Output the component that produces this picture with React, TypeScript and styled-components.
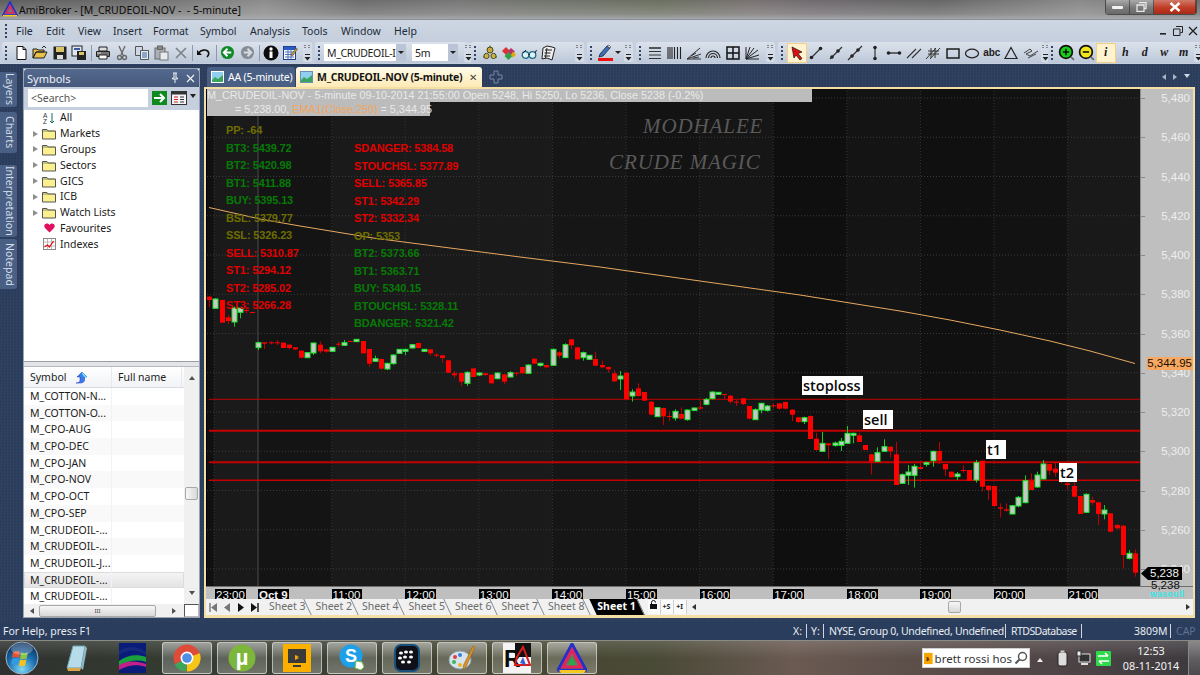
import React from "react";
import styled, { createGlobalStyle } from "styled-components";

const GlobalStyle = createGlobalStyle`
  html, body { margin: 0; padding: 0; background: #2b3d5c; }
  * { box-sizing: border-box; }
  #root { width: 1200px; height: 675px; overflow: hidden; }
`;

const UI = `"Noto Sans", "Open Sans", sans-serif`;
const ARIAL = `"Liberation Sans", Arial, sans-serif`;

const Shell = styled.div`
  width: 1200px;
  height: 675px;
  display: flex;
  flex-direction: column;
  font-family: ${UI};
  font-size: 11px;
  color: #1c1c1c;
  overflow: hidden;
`;

/* ---------- title bar ---------- */
const TitleBar = styled.div`
  height: 20px;
  flex: none;
  display: flex;
  align-items: flex-start;
  padding: 1px 3px 0 2px;
  background:
    linear-gradient(180deg, rgba(150,150,150,0) 0%, rgba(190,190,190,.35) 70%, #a9aeb4 100%),
    linear-gradient(90deg, #5e5e5e 0%, #6a6a6a 10%, #8d8d8d 22%, #6b6b6b 30%, #777 38%, #6f7269 48%, #6a6f5f 55%, #787272 63%, #6f6a6e 68%, #666 78%, #8a8a8a 90%, #6d6d6d 100%);
  box-shadow: inset 0 -1px 0 #8a8f96;
`;
const TitleText = styled.span`
  margin-left: 1px;
  font-size: 10.5px;
  line-height: 18px;
  white-space: pre;
  color: #0c0c0c;
`;
const WindowButtons = styled.div`
  margin-left: auto;
  margin-right: 0;
  display: flex;
  height: 15px;
  margin-top: -1px;
  border: 1px solid #4b4b4b;
  border-top: none;
  border-radius: 0 0 4px 4px;
  overflow: hidden;
`;
const WinButton = styled.div<{ $w: number; $danger?: boolean }>`
  width: ${p => p.$w}px;
  display: flex;
  align-items: center;
  justify-content: center;
  border-right: 1px solid rgba(30,30,30,.5);
  background: ${p => p.$danger
    ? "linear-gradient(180deg,#cf7a6a 0%,#c13c26 55%,#a82a18 100%)"
    : "linear-gradient(180deg,#a9a9a9 0%,#7a7a7a 55%,#6a6a6a 100%)"};
`;

/* ---------- menu bar ---------- */
const MenuBar = styled.div`
  height: 21px;
  flex: none;
  display: flex;
  align-items: center;
  padding: 0 0 0 3px;
  background: linear-gradient(180deg, #cdd6e2 0%, #c5cfdd 100%);
  font-size: 10.5px;
`;
const Grip = styled.i`
  flex: none;
  width: 2px;
  height: 14px;
  margin: 0 4px 0 2px;
  background: repeating-linear-gradient(180deg, #2f4468 0 2px, transparent 2px 4px);
`;
const MenuGrip = styled(Grip)`
  margin-right: 9px;
`;
const MenuItem = styled.span<{ $w: number }>`
  width: ${p => p.$w}px;
  flex: none;
  color: #222b38;
`;
const MdiButtons = styled.div`
  margin-left: auto;
  display: flex;
  gap: 5px;
  padding-right: 2px;
  align-items: center;
`;

/* ---------- tool bars ---------- */
const ToolRow = styled.div`
  height: 23px;
  flex: none;
  display: flex;
  gap: 3px;
  padding: 1px 2px 1px 2px;
  background: #c5cfdd;
`;
const ToolBand = styled.div<{ $w: number }>`
  width: ${p => p.$w}px;
  flex: none;
  display: flex;
  align-items: center;
  padding-left: 1px;
  border-radius: 3px;
  background: linear-gradient(180deg, #dbe2ec 0%, #ccd5e2 50%, #bcc8d9 100%);
`;
const Tool = styled.span<{ $selected?: boolean }>`
  width: 19.5px;
  height: 20px;
  flex: none;
  display: flex;
  align-items: center;
  justify-content: center;
  ${p => p.$selected && `
    background: #fff3cf;
    box-shadow: inset 0 0 0 1px #f3cf86;
  `}
`;
const ToolLetter = styled.span<{ $serif?: boolean }>`
  font-family: ${p => p.$serif ? `"Liberation Serif", serif` : ARIAL};
  font-weight: 700;
  font-size: ${p => p.$serif ? 12 : 10}px;
  font-style: ${p => p.$serif ? "italic" : "normal"};
  color: #202020;
`;
const Sep = styled.i`
  width: 1px;
  height: 16px;
  margin: 0 1.5px;
  flex: none;
  background: #8d99ab;
`;
const Spacer = styled.i`
  flex: 1;
`;
const Combo = styled.div<{ $w: number }>`
  width: ${p => p.$w}px;
  height: 17px;
  flex: none;
  background: #fff;
  display: flex;
  align-items: center;
  padding-left: 3px;
  font-size: 10.5px;
  letter-spacing: -0.35px;
  white-space: nowrap;
`;
const ComboArrow = styled.div`
  width: 10px;
  height: 17px;
  flex: none;
  background: #b9c5d6;
  display: flex;
  align-items: center;
  justify-content: center;
  margin-right: 6px;
  &::after {
    content: "";
    border: 3px solid transparent;
    border-top: 3px solid #222;
    border-bottom: none;
  }
`;
const MiniCaret = styled.i`
  flex: none;
  border: 3px solid transparent;
  border-top: 3px solid #222;
  border-bottom: none;
  margin: 0 3px 0 -1px;
`;
const OverflowBox = styled.span`
  width: 9px;
  height: 19px;
  flex: none;
  display: flex;
  flex-direction: column;
  align-items: center;
  justify-content: space-between;
  padding: 2px 0 1px;
  background: #d4dce7;
  border-radius: 2px;
`;

const Overflow = () => (
  <OverflowBox>
    <svg width="7" height="3" viewBox="0 0 7 3"><path d="M1 0v1M1 2v1M5 0v1M5 2v1" stroke="#333" /></svg>
    <svg width="7" height="7" viewBox="0 0 7 7"><rect x="1" y="0" width="5" height="1" fill="#222" /><path d="M.5 3h6L3.5 6.5z" fill="#222" /></svg>
  </OverflowBox>
);

/* ---------- main area ---------- */
const Main = styled.div`
  height: 558px;
  flex: none;
  display: flex;
  background-color: #2b3d5c;
  background-image: conic-gradient(#2f4262 25%, #2a3b59 0 50%, #2f4262 0 75%, #2a3b59 0);
  background-size: 3px 3px;
`;
const SideTabs = styled.div`
  width: 17px;
  flex: none;
  margin-right: 7px;
  display: flex;
  flex-direction: column;
  padding-top: 8px;
`;
const SideTab = styled.div<{ $h: number; $gap: number }>`
  height: ${p => p.$h}px;
  margin-bottom: ${p => p.$gap}px;
  writing-mode: vertical-rl;
  text-align: center;
  font-size: 10.5px;
  line-height: 15px;
  color: #d5deea;
  background: #4a5f84;
  border-radius: 0 3px 3px 0;
`;

const SymbolsPanel = styled.div`
  width: 175px;
  flex: none;
  margin-top: 5px;
  height: 548px;
  display: flex;
  flex-direction: column;
  background: #fff;
  box-shadow: 0 0 0 1px #9aa3b0;
`;
const PanelHead = styled.div`
  height: 18px;
  flex: none;
  display: flex;
  align-items: center;
  padding: 0 4px 0 3px;
  border-radius: 3px 3px 0 0;
  background: linear-gradient(180deg, #54698e 0%, #46597c 100%);
  color: #eef2f7;
  font-size: 11px;
  & > span { flex: 1; }
`;
const SearchRow = styled.div`
  height: 23px;
  flex: none;
  display: flex;
  align-items: center;
  padding: 0 3px 2px 4px;
  background: #c5cfdd;
`;
const SearchInput = styled.div`
  width: 120px;
  height: 18px;
  background: #fff;
  display: flex;
  align-items: center;
  padding-left: 3px;
  font-size: 10.5px;
  color: #555;
  margin-right: 4px;
  flex: none;
`;
const Tree = styled.div`
  height: 251px;
  flex: none;
  background: #fff;
`;
const TreeRow = styled.div`
  height: 15.8px;
  display: flex;
  align-items: center;
  font-size: 10.5px;
  line-height: 15px;
  color: #202020;
`;
const Expander = styled.i<{ $on?: boolean }>`
  width: 0;
  height: 0;
  margin-left: 9px;
  margin-right: 4px;
  flex: none;
  border-left: 5px solid ${p => p.$on ? "#8f8f8f" : "transparent"};
  border-top: 3.5px solid transparent;
  border-bottom: 3.5px solid transparent;
`;
const TreeIcon = styled.span`
  width: 14px;
  height: 14px;
  margin-right: 4px;
  flex: none;
  display: flex;
  align-items: center;
  justify-content: center;
`;
const Splitter = styled.div`
  height: 6px;
  flex: none;
  background: linear-gradient(180deg, #9a9fa6 0 1px, #e2e4e8 1px 5px, #b5b9c0 5px);
`;
const TableArea = styled.div`
  flex: 1;
  min-height: 0;
  display: flex;
  background: #fff;
`;
const TableCols = styled.div`
  flex: 1;
  min-width: 0;
  overflow: hidden;
`;
const TableHead = styled.div`
  height: 21px;
  display: flex;
  align-items: center;
  font-size: 10.5px;
  background: linear-gradient(180deg, #fff 0%, #f1f3f6 100%);
  border-bottom: 1px solid #d8dbe0;
`;
const HeadCell = styled.div<{ $w: number }>`
  width: ${p => p.$w}px;
  flex: none;
  height: 100%;
  display: flex;
  align-items: center;
  padding-left: 6px;
  gap: 9px;
  border-right: 1px solid #e8eaee;
`;
const TableRow = styled.div<{ $alt: boolean; $selected?: boolean }>`
  height: 16.7px;
  display: flex;
  align-items: center;
  font-size: 10.5px;
  white-space: nowrap;
  background: ${p => p.$selected
    ? "linear-gradient(180deg,#f5f5f5 0%,#e3e3e3 100%)"
    : p.$alt ? "#f9f9f9" : "#fff"};
  ${p => p.$selected && "box-shadow: inset 0 0 0 1px #dcdcdc;"}
`;
const SymCell = styled.div`
  width: 88px;
  padding-left: 6px;
  flex: none;
  border-right: 1px solid #eef3fa;
  height: 100%;
  line-height: 16px;
`;
const VScroll = styled.div`
  width: 15px;
  flex: none;
  background: #f0f0f0;
  display: flex;
  flex-direction: column;
  align-items: center;
  justify-content: space-between;
  padding: 6px 0;
`;
const VThumb = styled.div`
  width: 13px;
  height: 13px;
  margin-top: 15px;
  border: 1px solid #a8a8a8;
  border-radius: 2px;
  background: linear-gradient(90deg, #f7f7f7, #d8d8d8);
`;
const Tri = styled.i<{ $dir: "up" | "down" | "left" | "right"; $c?: string }>`
  width: 0;
  height: 0;
  flex: none;
  border: 3.5px solid transparent;
  ${p => `border-${({ up: "bottom", down: "top", left: "right", right: "left" })[p.$dir]}: 4px solid ${p.$c || "#505050"};`}
  ${p => `border-${p.$dir}: none;`}
`;
const HScrollRow = styled.div`
  height: 13px;
  flex: none;
  display: flex;
  align-items: center;
  background: #f0f0f0;
  padding-left: 6px;
`;
const HThumb = styled.div<{ $w: number; $ml: number }>`
  width: ${p => p.$w}px;
  height: 12px;
  margin-left: ${p => p.$ml}px;
  flex: none;
  border: 1px solid #a8a8a8;
  border-radius: 2px;
  background: linear-gradient(180deg, #f7f7f7, #d8d8d8);
  display: flex;
  align-items: center;
  justify-content: center;
  font-size: 6px;
  line-height: 8px;
  color: #444;
`;
const Corner = styled.div`
  margin-left: auto;
  width: 15px;
  height: 13px;
  border: 1px solid #555;
  border-right-color: #bbb;
  border-bottom-color: #bbb;
  background: #fff;
`;

/* ---------- workspace ---------- */
const Workspace = styled.div`
  width: 995px;
  flex: none;
  margin-left: 5px;
  display: flex;
  flex-direction: column;
`;
const TabStrip = styled.div`
  height: 23px;
  flex: none;
  padding: 2px 9px 0 3px;
  display: flex;
  align-items: flex-end;
`;
const DocTab = styled.div<{ $active?: boolean; $w: number }>`
  width: ${p => p.$w}px;
  height: 20px;
  flex: none;
  display: flex;
  align-items: center;
  gap: 4px;
  padding-left: 4px;
  font-size: 10.5px;
  white-space: nowrap;
  font-weight: ${p => p.$active ? 700 : 400};
  letter-spacing: ${p => p.$active ? "-0.25px" : "-0.2px"};
  color: ${p => p.$active ? "#151515" : "#fff"};
  background: ${p => p.$active ? "linear-gradient(180deg,#fffbe9,#fdeab6)" : "#4a5f84"};
  border-radius: 3px 3px 0 0;
  margin-right: 1px;
`;
const TabClose = styled.span`
  margin-left: 3px;
  font-size: 10px;
  font-weight: 400;
  color: #444;
`;
const TabTail = styled.div`
  margin-left: auto;
  display: flex;
  align-items: center;
  gap: 7px;
  height: 20px;
`;
const Frame = styled.div`
  width: 991px;
  height: 531px;
  flex: none;
  display: flex;
  flex-direction: column;
  border: 2px solid #f3dfa6;
  border-top-width: 2px;
  border-bottom-width: 3px;
  background: #bfbfbf;
`;
const ChartRow = styled.div`
  position: relative;
  height: 497px;
  flex: none;
  display: flex;
`;
const Plot = styled.div`
  position: relative;
  width: 934px;
  flex: none;
  background: #141414;
  overflow: hidden;
  border-left: 1px solid #000;
`;
const ChartSvg = styled.svg`
  display: block;
  position: absolute;
  left: 0;
  top: 0;
`;
const PriceAxis = styled.div`
  flex: 1;
  padding-top: 2px;
  background: #bfbfbf;
  border-left: 1px solid #8c8c8c;
`;
const PriceLabel = styled.div`
  height: 39.25px;
  line-height: 14px;
  text-align: right;
  padding-right: 3px;
  font-family: ${ARIAL};
  font-size: 11.5px;
  color: #eeeeee;
  position: relative;
  &::before {
    content: "";
    position: absolute;
    left: 0;
    top: 7px;
    width: 4px;
    height: 1px;
    background: #8a8a8a;
  }
`;
const PriceTag = styled.div`
  position: absolute;
  left: 941px;
  top: 268px;
  width: 46px;
  height: 13px;
  line-height: 13px;
  text-align: right;
  padding-right: 1px;
  background: #f7a862;
  font-family: ${ARIAL};
  font-size: 11.5px;
  color: #201000;
`;
const LastTag = styled.div`
  position: absolute;
  left: 935px;
  top: 478px;
  width: 41px;
  height: 13px;
  line-height: 13px;
  padding-left: 9px;
  background: #000;
  clip-path: polygon(0 50%, 7px 0, 100% 0, 100% 100%, 7px 100%);
  font-family: ${ARIAL};
  font-size: 11.5px;
  color: #f2f2f2;
`;
const LastPlain = styled.div`
  position: absolute;
  left: 945px;
  top: 491px;
  line-height: 10px;
  font-family: ${ARIAL};
  font-size: 11.5px;
  color: #111;
`;
const CyanNote = styled.div`
  position: absolute;
  left: 944px;
  top: 501px;
  line-height: 9px;
  font-family: ${ARIAL};
  font-weight: 700;
  font-size: 8.5px;
  letter-spacing: .5px;
  color: #35e6e6;
  z-index: 2;
`;
const InfoBar = styled.div`
  position: absolute;
  left: 0;
  top: -1px;
  font-family: ${ARIAL};
  font-size: 10.8px;
  line-height: 14px;
  color: #e9e9e9;
  white-space: nowrap;
`;
const InfoLine = styled.div<{ $w: number; $pad?: number }>`
  width: ${p => p.$w}px;
  height: 14px;
  padding-left: ${p => p.$pad || 0}px;
  background: #bcbcbc;
`;
const Ema = styled.span`
  color: #f2a55f;
`;
const Watermark = styled.div<{ $x: number; $y: number; $ls: number }>`
  position: absolute;
  left: ${p => p.$x}px;
  top: ${p => p.$y}px;
  font-family: "Liberation Serif", serif;
  font-style: italic;
  font-size: 21px;
  line-height: 24px;
  letter-spacing: ${p => p.$ls}px;
  color: #5a5a5a;
  white-space: nowrap;
`;
const Watermarks = styled.div``;
const LevelColumn = styled.div<{ $x: number; $y: number }>`
  position: absolute;
  left: ${p => p.$x}px;
  top: ${p => p.$y}px;
  display: flex;
  flex-direction: column;
  font-family: ${ARIAL};
  font-size: 11px;
  font-weight: 700;
  letter-spacing: -0.15px;
`;
const Level = styled.div<{ $c: string }>`
  height: 17.55px;
  line-height: 17.55px;
  white-space: nowrap;
  color: ${p => p.$c};
`;
const Note = styled.div<{ $x: number; $y: number; $w: number }>`
  position: absolute;
  left: ${p => p.$x}px;
  top: ${p => p.$y}px;
  width: ${p => p.$w}px;
  height: 19px;
  line-height: 19px;
  background: #fff;
  color: #0a0a0a;
  font-family: "Open Sans", sans-serif;
  font-weight: 600;
  font-size: 14.5px;
  padding-left: 1px;
  white-space: nowrap;
`;
const TimeAxis = styled.div`
  height: 13px;
  flex: none;
  display: flex;
  padding-left: 9px;
  background: #bfbfbf;
  border-top: 1px solid #6f6f6f;
`;
const TimeCell = styled.div<{ $w: number }>`
  width: ${p => p.$w}px;
  flex: none;
`;
const TimeLabel = styled.span<{ $bold?: boolean }>`
  display: inline-block;
  height: 12px;
  line-height: 12px;
  padding: 0 1px;
  background: #000;
  color: #f2f2f2;
  font-family: ${ARIAL};
  font-size: 11.5px;
  font-weight: ${p => p.$bold ? 700 : 400};
`;
const SheetRow = styled.div`
  flex: 1;
  display: flex;
  align-items: stretch;
  background: #f1f1f1;
  font-size: 10.5px;
`;
const SheetNav = styled.div`
  width: 58px;
  flex: none;
  display: flex;
  align-items: center;
  padding-left: 2px;
  gap: 4px;
`;
const SheetTab = styled.div<{ $active?: boolean }>`
  width: ${p => p.$active ? 54 : 46.5}px;
  flex: none;
  position: relative;
  text-align: center;
  line-height: 15px;
  color: ${p => p.$active ? "#fff" : "#6c6c6c"};
  font-weight: ${p => p.$active ? 700 : 400};
  z-index: ${p => p.$active ? 1 : 0};
  &::before {
    content: "";
    position: absolute;
    inset: 0 3px 0 3px;
    transform: skewX(25deg);
    border-right: 1px solid #888;
    background: ${p => p.$active ? "#000" : "transparent"};
    z-index: -1;
  }
`;
const SheetTabs = styled.div`
  display: flex;
  position: relative;
  z-index: 0;
`;
const SheetBtn = styled.div`
  width: 13px;
  height: 14px;
  margin-top: 1px;
  flex: none;
  background: #fafafa;
  border-right: 1px solid #cfcfcf;
  font-size: 7px;
  font-weight: 700;
  line-height: 14px;
  text-align: center;
  color: #222;
`;
const SheetTools = styled.div`
  margin-left: 4px;
  display: flex;
`;
const SheetTrack = styled.div`
  flex: 1;
  margin-left: 2px;
  display: flex;
  align-items: center;
  padding: 0 3px;
`;

/* ---------- status / task bars ---------- */
const StatusBar = styled.div`
  height: 18px;
  flex: none;
  display: flex;
  align-items: center;
  color: #e8edf3;
  font-size: 10.5px;
  background: #2b3d5c;
  white-space: nowrap;
`;
const StatusCell = styled.span<{ $w: number; $pad?: number; $dim?: boolean; $bar?: boolean; $tight?: number }>`
  width: ${p => p.$w}px;
  flex: none;
  padding-left: ${p => p.$pad ?? 3}px;
  line-height: 14px;
  letter-spacing: ${p => p.$tight || 0}px;
  color: ${p => p.$dim ? "#5f7190" : "#e8edf3"};
  ${p => p.$bar && "border-right: 1px solid #cfd6e0;"}
`;
const TaskBar = styled.div`
  height: 35px;
  flex: none;
  display: flex;
  align-items: center;
  border-top: 1px solid #8b8b86;
  background:
    linear-gradient(180deg, rgba(255,255,255,.14) 0%, rgba(255,255,255,0) 50%),
    linear-gradient(90deg, #2f3130 0%, #333a30 12%, #3d4132 30%, #45452f 42%, #4a4a38 55%, #6a5a52 66%, #5c4f49 76%, #4f4446 88%, #3c3a3e 100%);
`;
const TaskSlot = styled.div<{ $w: number; $active?: boolean; $ml?: number }>`
  width: ${p => p.$w}px;
  height: 32px;
  margin-right: ${p => p.$active ? 5 : 0}px;
  margin-left: ${p => p.$ml || 0}px;
  flex: none;
  display: flex;
  align-items: center;
  justify-content: center;
  border-radius: 3px;
  ${p => p.$active && `
    border: 1px solid rgba(235,235,235,.6);
    background: linear-gradient(180deg, rgba(255,255,255,.45) 0%, rgba(255,255,255,.2) 50%, rgba(255,255,255,.28) 100%);
  `}
`;
const Tray = styled.div`
  margin-left: auto;
  display: flex;
  align-items: center;
  height: 100%;
`;
const BingBox = styled.div`
  width: 108px;
  height: 20px;
  display: flex;
  align-items: center;
  gap: 2px;
  padding: 0 1px;
  background: #fff;
  border: 1px solid #cfcfcf;
  font-size: 11.5px;
  color: #333;
  white-space: nowrap;
  overflow: hidden;
`;
const TrayIcon = styled.span<{ $w: number }>`
  width: ${p => p.$w}px;
  flex: none;
  display: flex;
  align-items: center;
  justify-content: center;
`;
const Clock = styled.div`
  width: 74px;
  text-align: center;
  color: #f4f4f4;
  font-size: 10.8px;
  line-height: 15px;
`;
const ShowDesktop = styled.div`
  width: 12px;
  height: 100%;
  border-left: 1px solid #888;
  background: linear-gradient(180deg, rgba(255,255,255,.3), rgba(255,255,255,.08));
`;

/* ---------- icons ---------- */
const Svg = ({ s = 16, children }: { s?: number; children: React.ReactNode }) => (
  <svg width={s} height={s} viewBox="0 0 16 16">{children}</svg>
);

const ToolIcons: Record<string, React.ReactNode> = {
  file: <Svg><path d="M4 1.5h6l3 3v10H4z" fill="#fff" stroke="#111" /><path d="M10 1.5v3h3" fill="none" stroke="#111" /></Svg>,
  open: <Svg><path d="M1 13V4h4l1 1h6v2H4l-3 6 3-6h11l-3 6z" fill="#e9c04a" stroke="#222" /><path d="M10 3l2-2 2 2" fill="none" stroke="#222" /></Svg>,
  save: <Svg><rect x="1.5" y="1.5" width="13" height="13" fill="#222" /><rect x="4" y="2" width="8" height="5" fill="#d9c66a" /><rect x="5" y="10" width="6" height="4" fill="#ddd" /></Svg>,
  saveall: <Svg><rect x="1" y="1" width="10" height="10" fill="#dfe7f2" stroke="#222" /><rect x="3" y="3" width="6" height="2" fill="#3b5c9c" /><rect x="6" y="6" width="9" height="9" fill="#222" /><rect x="8" y="7" width="5" height="3" fill="#d9c66a" /></Svg>,
  print: <Svg><path d="M4 2h8v4H4z" fill="#ddd" stroke="#222" /><path d="M1.5 6.5h13v5h-13z" fill="#777" stroke="#222" /><path d="M4 10h8v4H4z" fill="#fff" stroke="#222" /><path d="M2 8h4" stroke="#ddd" /></Svg>,
  cut: <Svg><path d="M5 1l4 9M11 1L7 10" stroke="#666" strokeWidth="1.3" fill="none" /><circle cx="5.5" cy="12.5" r="2" fill="none" stroke="#666" strokeWidth="1.3" /><circle cx="10.5" cy="12.5" r="2" fill="none" stroke="#666" strokeWidth="1.3" /></Svg>,
  copy: <Svg><path d="M1.5 1.5h7v9h-7z" fill="#cfd7e4" stroke="#555" /><path d="M6.5 5.5h8v9h-8z" fill="#e8edf5" stroke="#555" /><path d="M8 8h5M8 10h5M8 12h5" stroke="#2f5fa8" /></Svg>,
  paste: <Svg><rect x="2" y="3" width="10" height="11" fill="#aab0b8" stroke="#666" /><rect x="4.5" y="1" width="5" height="3.5" fill="#888" stroke="#666" /><rect x="7" y="7" width="8" height="8" fill="#e6e9ee" stroke="#777" /></Svg>,
  del: <Svg><path d="M3 3l10 10M13 3L3 13" stroke="#7a7f86" strokeWidth="1.5" /></Svg>,
  undo: <Svg><path d="M2.5 8c3-3.5 7-3.5 9-2s1.5 4-.5 6" fill="none" stroke="#111" strokeWidth="1.6" /><path d="M1 5v5h5z" fill="#111" /></Svg>,
  back: <Svg s={15}><circle cx="8" cy="8" r="7" fill="#118a2a" /><path d="M4 8h8M8 4L4 8l4 4" stroke="#fff" strokeWidth="2" fill="none" /></Svg>,
  fwd: <Svg s={15}><circle cx="8" cy="8" r="7" fill="#878d96" /><path d="M4 8h8M8 4l4 4-4 4" stroke="#d9dde3" strokeWidth="2" fill="none" /></Svg>,
  info: <Svg><circle cx="8" cy="8" r="7.5" fill="#0c0c0c" /><rect x="6.5" y="6.5" width="3" height="6.5" fill="#fff" /><circle cx="8" cy="4" r="1.7" fill="#fff" /></Svg>,
  calc: <Svg><rect x="1.5" y="1.5" width="12" height="13" fill="#fff" stroke="#1e3f95" /><rect x="2" y="2" width="11" height="3" fill="#2b5cc2" /><path d="M3 7h9M3 9.5h9M3 12h9M6 5v9M9 5v9" stroke="#4c6fb8" /><path d="M9 10l5-7 1.5 1-5 7z" fill="#c9a227" stroke="#333" strokeWidth=".5" /></Svg>,
  gear: <Svg><circle cx="8" cy="5" r="3" fill="#c9a93a" stroke="#4a4a20" /><circle cx="4.5" cy="11" r="2.6" fill="#c9b64a" stroke="#4a4a20" /><circle cx="11.5" cy="11" r="2.6" fill="#c9b64a" stroke="#4a4a20" /><path d="M8 .5v2M3 8l1 1M13 8l-1 1M1 12h1M14 12h1" stroke="#4a4a20" /></Svg>,
  hearts: <Svg><path d="M5 2l4 4-4 4-4-4z" fill="#e03131" /><path d="M10 3l4 3.5L10 10 6.5 6.5z" fill="#b8326a" /><path d="M7.5 7l4 4-4 4-4-4z" fill="#2f9e44" /><path d="M12 6.5l3 3-3 3-2-2z" fill="#e0a800" /></Svg>,
  glasses: <Svg><circle cx="4.5" cy="10" r="3.3" fill="#dff2f7" stroke="#1f6b80" strokeWidth="1.3" /><circle cx="11.5" cy="10" r="3.3" fill="#dff2f7" stroke="#1f6b80" strokeWidth="1.3" /><path d="M7.5 9.5H9M14 8l1.5-3M2 8l3-3" stroke="#222" fill="none" /></Svg>,
  map: <Svg><path d="M3 3l4-2 5 1 3 1-3 12-5-2-5 1z" fill="#eee" stroke="#222" /><path d="M5 5h7M4.5 8h6M4 11h6M7 3l-1.5 10" stroke="#222" /></Svg>,
  pen: <svg width="15" height="18" viewBox="0 0 15 18"><path d="M2 10l7-8 3 2-7 8-4 1z" fill="#3d6fc0" stroke="#111" strokeWidth=".7" /><path d="M9 2l2-1 2 2-1 1z" fill="#eee" stroke="#111" strokeWidth=".5" /><rect x="0" y="14" width="15" height="3" fill="#f01010" /></svg>,
  hlines: <Svg><path d="M2 3h12M2 6.5h12M2 10h12M2 13.5h12" stroke="#333" strokeWidth="1" /><path d="M2 3h12" stroke="#222" /></Svg>,
  vlines: <Svg><path d="M2 2v12M4 2v12M6 2v12M8.5 2v12M11.5 2v12M14.5 2v12" stroke="#222" strokeWidth="1.1" /></Svg>,
  fib: <Svg><path d="M1 14L14 3M1 14l14-5M1 14h14" stroke="#333" fill="none" /><path d="M5 11l5-3M7 13l6-1" stroke="#333" /></Svg>,
  arcs: <Svg><path d="M1 13a7 7 0 0 1 14 0M3.5 13a4.5 4.5 0 0 1 9 0M6 13a2 2 0 0 1 4 0" fill="none" stroke="#222" strokeWidth="1.2" /></Svg>,
  grid: <Svg><path d="M2 2h12v12H2zM2 8h12M8 2v12" fill="none" stroke="#111" strokeWidth="1.5" /></Svg>,
  gann: <Svg><path d="M2 14V2M2 14h13M2 14L6 2M2 14L10 3M2 14L14 5M2 14l13-4" stroke="#222" fill="none" /></Svg>,
  cursor: <Svg><path d="M3 2l10 5-4 1.5 4 5-2 1.5-4-5-2 3z" fill="#e01010" stroke="#111" strokeWidth=".7" /></Svg>,
  seg1: <Svg><path d="M3 13L13 3" stroke="#333" strokeWidth="1.2" /><circle cx="3.5" cy="12.5" r="1.8" fill="#222" /><circle cx="12.5" cy="3.5" r="1.8" fill="#222" /></Svg>,
  seg2: <Svg><path d="M2 14L14 2" stroke="#333" strokeWidth="1.2" /><circle cx="4" cy="12" r="1.8" fill="#222" /><circle cx="10" cy="6" r="1.8" fill="#222" /></Svg>,
  seg3: <Svg><path d="M1 15L15 1" stroke="#333" strokeWidth="1.2" /><circle cx="5" cy="11" r="1.8" fill="#222" /><circle cx="11" cy="5" r="1.8" fill="#222" /></Svg>,
  vseg: <Svg><path d="M8 2v12" stroke="#333" strokeWidth="1.2" /><circle cx="8" cy="2.5" r="1.8" fill="#222" /><circle cx="8" cy="13.5" r="1.8" fill="#222" /></Svg>,
  hseg: <Svg><path d="M1 8h14" stroke="#333" strokeWidth="1.4" /><circle cx="2.5" cy="8" r="1.8" fill="#222" /><circle cx="13.5" cy="8" r="1.8" fill="#222" /></Svg>,
  par: <Svg><path d="M1 13L10 4M6 13l9-9" stroke="#333" strokeWidth="1.1" /></Svg>,
  pitch: <Svg><path d="M1 14L11 3M5 14L15 3M3 9h11M3 6h11M6 3v10M10 3v10" stroke="#333" fill="none" /></Svg>,
  rect: <Svg><rect x="2" y="4" width="12" height="9" fill="none" stroke="#111" strokeWidth="1.4" /></Svg>,
  ellipse: <Svg><ellipse cx="8" cy="8.5" rx="6.5" ry="4.3" fill="none" stroke="#222" strokeWidth="1.2" /></Svg>,
  tri: <Svg><path d="M8 2.5l6 11H2z" fill="none" stroke="#222" strokeWidth="1.2" /></Svg>,
  wave: <Svg><path d="M1 8l6-4 2 2-6 3 4 2 8-5M5 13l8-4" stroke="#444" fill="none" /></Svg>,
  zoomin: <Svg s={17}><circle cx="7.5" cy="7.5" r="6" fill="#18d018" stroke="#111" strokeWidth="1.6" /><path d="M4.5 7.5h6M7.5 4.5v6" stroke="#111" strokeWidth="1.5" /><path d="M12 12l3 3" stroke="#666" strokeWidth="1.5" /></Svg>,
  zoomout: <Svg s={17}><circle cx="7.5" cy="7.5" r="6" fill="#f2e51a" stroke="#111" strokeWidth="1.6" /><path d="M4.5 7.5h6" stroke="#111" strokeWidth="1.5" /><path d="M12 12l3 3" stroke="#666" strokeWidth="1.5" /></Svg>,
};

const T = ({ n, sel }: { n: string; sel?: boolean }) => <Tool $selected={sel}>{ToolIcons[n]}</Tool>;
const L = ({ t, sel, serif }: { t: string; sel?: boolean; serif?: boolean }) => (
  <Tool $selected={sel}><ToolLetter $serif={serif}>{t}</ToolLetter></Tool>
);

const FolderIcon = () => (
  <svg width="14" height="13" viewBox="0 0 14 13"><path d="M.5 2.5H5L6 4h7.5v8H.5z" fill="#fbf090" stroke="#555" /><path d="M1 4h12" stroke="#8a8a60" /></svg>
);

const NavIcon = ({ d, c, bar }: { d: string; c: string; bar?: string }) => (
  <svg width="10" height="11" viewBox="0 0 10 11">
    {bar && <path d={bar} stroke={c} strokeWidth="1.4" />}
    <path d={d} fill={c} />
  </svg>
);

const TaskIcons = {
  orb: (
    <svg width="34" height="34" viewBox="0 0 34 34">
      <defs>
        <radialGradient id="orb" cx="50%" cy="85%" r="80%"><stop offset="0" stopColor="#7fd9f5" /><stop offset=".55" stopColor="#1d6fb0" /><stop offset="1" stopColor="#0c2f5c" /></radialGradient>
      </defs>
      <circle cx="17" cy="17" r="16" fill="url(#orb)" stroke="#9fb4c6" strokeWidth="1" />
      <path d="M8 11c3-1.5 5-1 7 0l-1 6c-2-1-4-1.5-7 0z" fill="#e8502f" />
      <path d="M16 11.5c2.5 1 4.5 1 7 0l-1.5 6c-2 1-4.5 1-6.5 0z" fill="#8cc63f" />
      <path d="M7 18c3-1.5 5-1 7 0l-1 6c-2-1-4-1.5-7 0z" fill="#2f9be0" />
      <path d="M15 18.5c2 1 4.5 1 6.5 0l-1.5 6c-2 1-4.5 1-6 0z" fill="#f6c21c" />
      <ellipse cx="17" cy="8" rx="11" ry="6" fill="#fff" opacity=".25" />
    </svg>
  ),
  notepad: (
    <svg width="26" height="28" viewBox="0 0 26 28"><path d="M9 2h12l-4 22H3z" fill="#b5dce8" stroke="#6f9fb0" /><path d="M21 2l2 2-4 22-2-2z" fill="#8fb5c2" /><path d="M3 24h14l-1 3H4z" fill="#d9a648" /></svg>
  ),
  ami: (
    <svg width="27" height="30" viewBox="0 0 27 30"><rect width="27" height="30" fill="#0a1c7a" /><path d="M0 18c8-6 18-7 27-4v5c-9-3-18-1-27 4z" fill="#19a03c" /><path d="M0 22c9-5 18-4 27-1v3c-9-3-18-2-27 3z" fill="#c21f8a" /><path d="M0 8c9-6 18-5 27 1v3C18 6 9 6 0 12z" fill="#16297e" /></svg>
  ),
  chrome: (
    <svg width="28" height="28" viewBox="0 0 26 26">
      <circle cx="13" cy="13" r="12.5" fill="#dd4b39" />
      <path d="M13 13L1.5 19a12.5 12.5 0 0 0 11 6.5z" fill="#3ba55c" />
      <path d="M13 13l11.8-4.5A12.5 12.5 0 0 1 13 25.5L13 13z" fill="#f5c518" />
      <circle cx="13" cy="13" r="6" fill="#fff" /><circle cx="13" cy="13" r="4.5" fill="#4f8fe6" />
    </svg>
  ),
  utorrent: (
    <svg width="28" height="28" viewBox="0 0 28 28"><circle cx="14" cy="14" r="13.5" fill="#7cb63a" /><text x="14" y="21" textAnchor="middle" fontFamily="Liberation Sans, sans-serif" fontWeight="700" fontSize="22" fill="#fff">µ</text></svg>
  ),
  bing: (
    <svg width="28" height="28" viewBox="0 0 28 28"><rect width="28" height="28" fill="#fbb000" /><rect x="5" y="5" width="18" height="14" fill="#3a3a3a" /><rect x="10" y="21" width="8" height="2" fill="#3a3a3a" /><path d="M12 8v8l4-2-2-1 2-.5-4-1.5" fill="#f7a700" /></svg>
  ),
  skype: (
    <svg width="28" height="28" viewBox="0 0 28 28"><circle cx="13" cy="12" r="11.5" fill="#1da0e8" /><text x="13" y="18" textAnchor="middle" fontFamily="Liberation Sans, sans-serif" fontWeight="700" fontSize="18" fill="#fff">S</text><path d="M18 17l6 1 2 5-3 3-6-2z" fill="#fff" stroke="#7bc043" /></svg>
  ),
  bb: (
    <svg width="26" height="28" viewBox="0 0 26 28"><rect x="1" y="1" width="24" height="26" rx="6" fill="#101018" stroke="#16507d" strokeWidth="2" />
      {[[7, 9], [12, 8], [17, 8], [6, 14], [11, 13], [17, 13], [9, 18], [15, 18]].map(([x, y], i) => <ellipse key={i} cx={x} cy={y} rx="2" ry="1.5" fill="#fff" />)}
    </svg>
  ),
  palette: (
    <svg width="28" height="28" viewBox="0 0 28 28"><ellipse cx="12" cy="16" rx="11" ry="9" fill="#d6e3ea" stroke="#8fa5b0" /><circle cx="7" cy="13" r="2" fill="#e23c3c" /><circle cx="12" cy="11" r="2" fill="#3c7de2" /><circle cx="6" cy="18" r="2" fill="#3cb45a" /><circle cx="12" cy="21" r="2" fill="#f0b323" /><path d="M25 2l2 1-9 20-3 2 .5-4z" fill="#d98f2b" stroke="#8a5a10" strokeWidth=".5" /></svg>
  ),
  rlogo: (
    <svg width="28" height="30" viewBox="0 0 28 30"><rect width="28" height="30" fill="#f4f4f4" /><rect x="12" y="0" width="16" height="14" fill="#111" /><text x="1" y="24" fontFamily="Liberation Sans, sans-serif" fontWeight="700" fontSize="23" fill="#0c0c0c">R</text><path d="M14 14l6-10 7 18H12z" fill="none" stroke="#d81e1e" strokeWidth="2" /><path d="M17 20l3-6 3 8z" fill="#3a5fd6" /></svg>
  ),
  amiTri: (
    <svg width="30" height="30" viewBox="0 0 30 30"><path d="M15 1l14 26H1z" fill="none" stroke="#2430c9" strokeWidth="3" /><path d="M15 7l9 17H6z" fill="none" stroke="#e2245a" strokeWidth="3" /><path d="M2 27h27l-2 3H4z" fill="#f4c81e" /><path d="M12 19l3-5 4 8h-8z" fill="#27a84a" /></svg>
  ),
};

/* ---------- chart data: values read in 3x crop pixels, y = base + v / 3 ---------- */
type Row = [number, number, number, number, number];

const earlyRows: Row[] = [
  [588, 590, 600, 622, 0], [595, 597, 625, 625, 1], [600, 600, 668, 668, 0], [645, 652, 663, 672, 0],
  [620, 624, 666, 680, 1], [624, 624, 637, 655, 1], [620, 630, 632, 640, 0], [636, 636, 637, 638, 0],
];
const morningRows: Row[] = [
  [155, 158, 173, 180, 1], [157, 157, 161, 177, 0], [154, 157, 160, 163, 0], [150, 157, 160, 165, 0],
  [157, 158, 174, 174, 0], [163, 164, 174, 178, 0], [172, 172, 178, 180, 0], [181, 182, 203, 205, 0],
  [187, 188, 203, 205, 1], [158, 159, 189, 195, 1], [155, 164, 184, 190, 0], [177, 178, 185, 188, 0],
  [172, 172, 184, 186, 1], [155, 161, 163, 170, 0], [150, 158, 166, 168, 1], [152, 153, 155, 155, 0],
  [147, 148, 155, 156, 1], [153, 153, 190, 190, 0], [177, 177, 221, 230, 0], [197, 206, 214, 215, 1],
  [206, 207, 236, 238, 0], [218, 220, 237, 240, 1], [193, 195, 221, 224, 1], [177, 178, 190, 192, 1],
  [176, 178, 184, 195, 1], [162, 164, 174, 176, 1], [158, 159, 174, 175, 0], [177, 178, 184, 186, 1],
  [177, 178, 190, 197, 0], [190, 194, 197, 202, 0], [195, 196, 204, 218, 0], [211, 211, 248, 250, 0],
  [243, 250, 256, 264, 0], [248, 249, 275, 288, 0], [244, 247, 280, 288, 1], [235, 235, 261, 261, 0],
  [247, 249, 255, 258, 1], [249, 250, 255, 258, 0], [253, 254, 280, 280, 0], [247, 249, 266, 268, 1],
  [252, 253, 275, 283, 0], [243, 248, 261, 262, 1], [247, 248, 250, 258, 0], [230, 231, 250, 250, 0],
  [223, 225, 250, 252, 1], [205, 206, 221, 222, 0], [218, 220, 226, 230, 1], [224, 225, 232, 233, 0],
  [175, 178, 226, 228, 1], [184, 187, 197, 205, 0], [160, 164, 203, 204, 1], [148, 148, 166, 177, 0],
  [172, 172, 208, 209, 0], [185, 188, 203, 212, 1], [195, 196, 208, 209, 1], [185, 207, 227, 228, 0],
  [212, 225, 232, 235, 0], [230, 231, 238, 248, 0], [240, 250, 274, 276, 0], [243, 258, 267, 300, 1],
];
const middayRows: Row[] = [
  [8, 8, 88, 88, 0], [58, 66, 78, 95, 1], [40, 55, 78, 80, 0], [66, 66, 92, 92, 0],
  [93, 95, 134, 136, 0], [112, 113, 140, 141, 1], [113, 114, 139, 165, 0], [125, 138, 141, 153, 0],
  [118, 124, 144, 152, 1], [112, 132, 146, 148, 0], [118, 120, 149, 152, 1], [112, 114, 121, 123, 1],
  [93, 112, 116, 118, 0], [84, 88, 103, 106, 1], [64, 66, 86, 88, 1], [66, 67, 73, 75, 1],
  [72, 72, 75, 90, 0], [76, 77, 95, 100, 0], [90, 95, 97, 108, 0], [85, 85, 102, 105, 0],
  [108, 108, 146, 148, 0], [115, 119, 149, 150, 1], [98, 100, 120, 130, 1], [105, 108, 121, 125, 1],
  [100, 106, 108, 115, 0], [100, 100, 116, 118, 0], [94, 96, 116, 118, 0], [118, 119, 134, 153, 0],
  [142, 142, 156, 158, 0], [140, 143, 155, 162, 1], [136, 138, 207, 208, 0], [188, 206, 240, 243, 0],
  [186, 220, 244, 245, 1], [220, 220, 226, 266, 0], [215, 219, 226, 230, 1], [204, 214, 226, 243, 1],
  [168, 190, 220, 222, 1], [188, 190, 196, 220, 1], [188, 196, 216, 216, 0], [225, 225, 240, 240, 0],
  [252, 253, 274, 313, 0], [232, 248, 274, 276, 1], [208, 230, 244, 246, 1], [230, 230, 244, 262, 0],
  [216, 253, 345, 345, 0], [310, 314, 340, 342, 1], [285, 306, 316, 345, 1], [282, 289, 316, 353, 1],
];
const lateRows: Row[] = [
  [125, 141, 147, 148, 0], [125, 128, 133, 140, 1], [92, 94, 122, 140, 1], [66, 93, 122, 132, 0],
  [132, 132, 148, 168, 0], [155, 155, 172, 172, 0], [156, 162, 170, 180, 1], [136, 150, 153, 158, 0],
  [150, 150, 182, 182, 0], [120, 128, 180, 188, 1], [122, 122, 200, 214, 0], [197, 197, 210, 240, 0],
  [198, 198, 258, 260, 0], [250, 262, 266, 292, 0], [250, 268, 272, 275, 0], [255, 257, 282, 283, 1],
  [228, 232, 258, 262, 1], [166, 182, 248, 250, 1], [160, 182, 210, 210, 0], [155, 165, 201, 204, 1],
  [120, 132, 177, 178, 1], [132, 132, 152, 165, 0], [128, 146, 158, 170, 0], [150, 160, 175, 190, 0],
  [185, 190, 195, 208, 0], [185, 198, 230, 232, 0], [228, 228, 282, 282, 0], [220, 223, 277, 278, 1],
  [230, 240, 248, 255, 0], [245, 247, 282, 315, 0], [255, 270, 282, 298, 1], [280, 280, 335, 337, 0],
  [312, 315, 325, 328, 0], [316, 317, 405, 445, 0], [390, 400, 415, 418, 1], [388, 400, 458, 470, 0],
];

const scale = (base: number, rows: Row[]) =>
  rows.map(([a, b, c, d, up]) => ({
    wickTop: base + a / 3, bodyTop: base + b / 3, bodyBot: base + c / 3, wickBot: base + d / 3, up: up === 1,
  }));

const candles = [
  ...scale(100, earlyRows),
  ...scale(290, morningRows),
  ...scale(370, middayRows),
  ...scale(420, lateRows),
];

const candleX = (i: number) => 258.3 + 6.13 * (i - 8);

const gridX = [214, 258, 331.6, 405.2, 478.8, 552.4, 626, 699.6, 773.2, 846.8, 920.4, 994, 1067.6];
const gridY = Array.from({ length: 13 }, (_, i) => 98 + i * 39.25);
const shades: [number, number, string][] = [
  [207, 214, "#101010"], [214, 258, "#1a1a1a"], [258, 331.6, "#141414"], [331.6, 552.4, "#1a1a1a"],
  [552.4, 626, "#161616"], [626, 699.6, "#131313"], [699.6, 773, "#161616"], [773, 847, "#0f0f0f"],
  [847, 920.4, "#141414"], [920.4, 994, "#101010"], [994, 1067.6, "#121212"], [1067.6, 1141, "#191919"],
];
const redLines: [number, number][] = [[399.3, 1], [430.7, 2], [462.3, 2], [480.2, 1.6]];
const emaPath = "209,207.5 260,219 300,226 373,238 450,248 520,257 600,267 700,281 800,295 900,311 950,320 1000,330 1050,341 1090,351 1135,363.5";

const levelsA: [string, string][] = [
  ["PP: -64", "#6e6e00"], ["BT3: 5439.72", "#067a06"], ["BT2: 5420.98", "#067a06"], ["BT1: 5411.88", "#067a06"],
  ["BUY: 5395.13", "#067a06"], ["BSL: 5379.77", "#6e6e00"], ["SSL: 5326.23", "#6e6e00"], ["SELL: 5310.87", "#e00000"],
  ["ST1: 5294.12", "#e00000"], ["ST2: 5285.02", "#e00000"], ["ST3: 5266.28", "#e00000"],
];
const levelsB: [string, string][] = [
  ["SDANGER: 5384.58", "#e00000"], ["STOUCHSL: 5377.89", "#e00000"], ["SELL: 5365.85", "#e00000"], ["ST1: 5342.29", "#e00000"],
  ["ST2: 5332.34", "#e00000"], ["OP: 5353", "#6e6e00"], ["BT2: 5373.66", "#067a06"], ["BT1: 5363.71", "#067a06"],
  ["BUY: 5340.15", "#067a06"], ["BTOUCHSL: 5328.11", "#067a06"], ["BDANGER: 5321.42", "#067a06"],
];

const prices = ["5,480", "5,460", "5,440", "5,420", "5,400", "5,380", "5,360", "5,340", "5,320", "5,300", "5,280", "5,260", "5,240"];
const hours = ["11:00", "12:00", "13:00", "14:00", "15:00", "16:00", "17:00", "18:00", "19:00", "20:00", "21:00"];
const sheets = ["Sheet 3", "Sheet 2", "Sheet 4", "Sheet 5", "Sheet 6", "Sheet 7", "Sheet 8"];
const symbols = [
  "M_COTTON-N...", "M_COTTON-O...", "M_CPO-AUG", "M_CPO-DEC", "M_CPO-JAN", "M_CPO-NOV", "M_CPO-OCT", "M_CPO-SEP",
  "M_CRUDEOIL-...", "M_CRUDEOIL-...", "M_CRUDEOIL-J...", "M_CRUDEOIL-...", "M_CRUDEOIL-...",
];
const treeFolders = ["Markets", "Groups", "Sectors", "GICS", "ICB", "Watch Lists"];

const Candles = () => (
  <g transform="translate(-207,-89)">
    {shades.map(([a, b, c]) => <rect key={a} x={a} y={88} width={b - a} height={498} fill={c} />)}
    {gridY.map(y => <line key={y} x1={207} x2={1141} y1={y} y2={y} stroke="#3a3a3a" strokeDasharray="1 2" />)}
    {gridX.map((x, i) => <line key={x} x1={x} x2={x} y1={88} y2={586} stroke={i === 1 ? "#4c4c4c" : "#363636"} strokeDasharray={i === 1 ? undefined : "1 2"} />)}
    {redLines.map(([y, w]) => <line key={y} x1={209} x2={1141} y1={y} y2={y} stroke="#c40000" strokeWidth={w} />)}
    <polyline points={emaPath} fill="none" stroke="#e8a860" strokeWidth="1" />
    {candles.map((c, i) => {
      const x = Math.round(candleX(i));
      return (
        <g key={i}>
          <line x1={x + .5} x2={x + .5} y1={c.wickTop} y2={c.wickBot} stroke={c.up ? "#16cc22" : "#c00000"} />
          <rect
            x={x - 2}
            y={c.bodyTop}
            width={5}
            height={Math.max(c.bodyBot - c.bodyTop, 1)}
            fill={c.up ? "#c8c8c8" : "#ff0000"}
            stroke={c.up ? "#1be82a" : "none"}
            strokeWidth={c.up ? 1 : 0}
          />
        </g>
      );
    })}
  </g>
);

export default function App() {
  return (
    <Shell>
      <GlobalStyle />
      <TitleBar>
        <svg width="16" height="16" viewBox="0 0 16 16"><path d="M8 1l7 13H1z" fill="none" stroke="#2430c9" strokeWidth="1.6" /><path d="M8 5l4 7H4z" fill="none" stroke="#e2245a" strokeWidth="1.6" /><path d="M1 14h14v1.5H1z" fill="#f4c81e" /></svg>
        <TitleText>{"AmiBroker - [M_CRUDEOIL-NOV -  - 5-minute]"}</TitleText>
        <WindowButtons>
          <WinButton $w={24}><svg width="11" height="4"><rect width="11" height="3" y="1" rx="1" fill="#f2f2f2" /></svg></WinButton>
          <WinButton $w={24}><svg width="11" height="10" viewBox="0 0 11 10"><path d="M3 .5h7v6H8M1 3h7v6.5H1z" fill="none" stroke="#e8e8e8" strokeWidth="1.3" /></svg></WinButton>
          <WinButton $w={42} $danger><svg width="12" height="10" viewBox="0 0 12 10"><path d="M1.5 1l9 8M10.5 1l-9 8" stroke="#fff" strokeWidth="2.4" /></svg></WinButton>
        </WindowButtons>
      </TitleBar>

      <MenuBar>
        <MenuGrip />
        {([["File", 30], ["Edit", 32], ["View", 35], ["Insert", 40], ["Format", 47], ["Symbol", 50], ["Analysis", 52], ["Tools", 39], ["Window", 53], ["Help", 40]] as [string, number][]).map(([m, w]) => (
          <MenuItem key={m} $w={w}>{m}</MenuItem>
        ))}
        <MdiButtons>
          <svg width="10" height="10" viewBox="0 0 10 10"><rect x="2" y="7" width="6" height="1.6" fill="#222" /></svg>
          <svg width="10" height="10" viewBox="0 0 10 10"><path d="M3 .5h6.5v6H7.5M.5 3H7v6.5H.5z" fill="none" stroke="#222" /></svg>
          <svg width="10" height="10" viewBox="0 0 10 10"><path d="M1 1l8 8M9 1L1 9" stroke="#222" strokeWidth="1.3" /></svg>
        </MdiButtons>
      </MenuBar>

      <ToolRow>
        <ToolBand $w={310}>
          <Grip />
          <T n="file" /><T n="open" /><T n="save" /><T n="saveall" /><Sep />
          <T n="print" /><T n="cut" /><T n="copy" /><T n="paste" /><T n="del" /><Sep />
          <T n="undo" /><Sep /><T n="back" /><T n="fwd" /><Sep />
          <T n="info" /><T n="calc" /><Spacer /><Overflow />
        </ToolBand>
        <ToolBand $w={153}>
          <Grip />
          <Combo $w={72}>M_CRUDEOIL-I</Combo><ComboArrow />
          <Combo $w={36}>5m</Combo><ComboArrow /><Spacer /><Overflow />
        </ToolBand>
        <ToolBand $w={113}>
          <Grip />
          <T n="gear" /><T n="hearts" /><T n="glasses" /><T n="map" /><Spacer /><Overflow />
        </ToolBand>
        <ToolBand $w={46}>
          <Grip />
          <T n="pen" /><MiniCaret /><Spacer /><Overflow />
        </ToolBand>
        <ToolBand $w={139}>
          <Grip />
          <T n="hlines" /><T n="vlines" /><T n="fib" /><T n="arcs" /><T n="grid" /><T n="gann" /><Spacer /><Overflow />
        </ToolBand>
        <ToolBand $w={267}>
          <Grip />
          <T n="cursor" sel /><T n="seg1" /><T n="seg2" /><T n="seg3" /><T n="vseg" /><T n="hseg" /><T n="par" /><T n="pitch" />
          <T n="rect" /><T n="ellipse" /><L t="abc" /><T n="tri" /><T n="wave" /><Spacer /><Overflow />
        </ToolBand>
        <ToolBand $w={153}>
          <Grip />
          <T n="zoomin" /><T n="zoomout" /><L t="i" sel serif /><L t="h" serif /><L t="d" serif /><L t="w" serif /><L t="m" serif /><Spacer /><Overflow />
        </ToolBand>
      </ToolRow>

      <Main>
        <SideTabs>
          <SideTab $h={35} $gap={5}>Layers</SideTab>
          <SideTab $h={41} $gap={12}>Charts</SideTab>
          <SideTab $h={72} $gap={2}>Interpretation</SideTab>
          <SideTab $h={50} $gap={0}>Notepad</SideTab>
        </SideTabs>

        <SymbolsPanel>
          <PanelHead>
            <span>Symbols</span>
            <svg width="10" height="12" viewBox="0 0 10 12" style={{ marginRight: 6 }}><path d="M3 1h4M4 1v5H2.5v1h5V6H6V1M5 7v4" fill="none" stroke="#eef2f7" /></svg>
            <svg width="9" height="9" viewBox="0 0 9 9"><path d="M1 1l7 7M8 1L1 8" stroke="#eef2f7" strokeWidth="1.2" /></svg>
          </PanelHead>
          <SearchRow>
            <SearchInput>&lt;Search&gt;</SearchInput>
            <svg width="15" height="14" viewBox="0 0 15 14" style={{ marginRight: 4 }}><rect width="15" height="14" fill="#0f8a1f" /><path d="M2 7h10M8 3l4 4-4 4" stroke="#fff" strokeWidth="2" fill="none" /></svg>
            <svg width="16" height="14" viewBox="0 0 16 14" style={{ marginRight: 3 }}><rect x=".5" y=".5" width="15" height="13" fill="#f4f4f4" stroke="#333" /><rect x="1" y="1" width="14" height="2.5" fill="#333" /><path d="M3 6h4M3 8.5h4M3 11h4" stroke="#d02020" /><path d="M9 6h4M9 8.5h4M9 11h4" stroke="#333" /></svg>
            <Tri $dir="down" $c="#222" />
          </SearchRow>
          <Tree>
            <TreeRow>
              <Expander />
              <TreeIcon><svg width="14" height="14" viewBox="0 0 14 14"><text x="1" y="6.5" fontSize="6.5" fontFamily="Liberation Sans, sans-serif" fill="#333">A</text><text x="1" y="13" fontSize="6.5" fontFamily="Liberation Sans, sans-serif" fill="#333">Z</text><path d="M10 2v10M8 10l2 2 2-2" stroke="#107060" fill="none" /></svg></TreeIcon>
              All
            </TreeRow>
            {treeFolders.map(f => (
              <TreeRow key={f}><Expander $on /><TreeIcon><FolderIcon /></TreeIcon>{f}</TreeRow>
            ))}
            <TreeRow>
              <Expander />
              <TreeIcon><svg width="11" height="10" viewBox="0 0 11 10"><path d="M5.5 9.5L1 5C-.5 3 .5.5 3 .5c1.2 0 2 .7 2.5 1.5C6 1.2 6.8.5 8 .5c2.5 0 3.5 2.5 2 4.5z" fill="#e0105f" /></svg></TreeIcon>
              Favourites
            </TreeRow>
            <TreeRow>
              <Expander />
              <TreeIcon><svg width="13" height="12" viewBox="0 0 13 12"><rect x=".5" y=".5" width="12" height="11" fill="#fff" stroke="#888" /><path d="M4.5 1v10M8.5 1v10M1 4h11M1 8h11" stroke="#bbb" /><path d="M1.5 9l3-2 2 2 4-6" fill="none" stroke="#e01010" strokeWidth="1.3" /></svg></TreeIcon>
              Indexes
            </TreeRow>
          </Tree>
          <Splitter />
          <TableArea>
            <TableCols>
              <TableHead>
                <HeadCell $w={88}>
                  Symbol
                  <svg width="14" height="13" viewBox="0 0 14 13"><path d="M7 1l5 5H9.5v3c0 2-2 3-4 3H1c3 0 4-1 4-3V6H2z" fill="#3b7be8" stroke="#1b2fd0" strokeWidth=".5" /><path d="M7 1l5 5H9L7 3z" fill="#5ee0f0" /></svg>
                </HeadCell>
                <HeadCell $w={70}>Full name</HeadCell>
              </TableHead>
              {symbols.map((s, i) => (
                <TableRow key={i} $alt={i % 2 === 1} $selected={i === 11}>
                  <SymCell>{s}</SymCell>
                </TableRow>
              ))}
            </TableCols>
            <VScroll>
              <Tri $dir="up" />
              <VThumb />
              <Tri $dir="down" />
            </VScroll>
          </TableArea>
          <HScrollRow>
            <Tri $dir="left" />
            <HThumb $w={117} $ml={5}>III</HThumb>
            <Tri $dir="right" style={{ marginLeft: 16 }} />
            <Corner />
          </HScrollRow>
        </SymbolsPanel>

        <Workspace>
          <TabStrip>
            <DocTab $w={88}>
              <svg width="13" height="12" viewBox="0 0 13 12"><rect x=".5" y=".5" width="12" height="11" fill="#8fd0ee" stroke="#fff" /><path d="M1 9l3-3 3 2 5-4v7H1z" fill="#3aa55c" /></svg>
              AA (5-minute)
            </DocTab>
            <DocTab $w={186} $active>
              <svg width="13" height="12" viewBox="0 0 13 12"><rect x=".5" y=".5" width="12" height="11" fill="#8fd0ee" stroke="#6a8fb5" /><path d="M1 9l3-3 3 2 5-4v7H1z" fill="#3aa55c" /></svg>
              M_CRUDEOIL-NOV (5-minute)
              <TabClose>✕</TabClose>
            </DocTab>
            <svg width="14" height="14" viewBox="0 0 14 14" style={{ marginLeft: 6, marginBottom: 3 }}><path d="M5 1h4v4h4v4H9v4H5V9H1V5h4z" fill="none" stroke="#7788a4" /></svg>
            <TabTail>
              <Tri $dir="left" $c="#a9b6c8" />
              <Tri $dir="right" $c="#a9b6c8" />
              <Tri $dir="down" $c="#cfd8e4" />
            </TabTail>
          </TabStrip>

          <Frame>
            <ChartRow>
              <Plot>
                <ChartSvg width="933" height="497" viewBox="0 0 933 497">
                  <Candles />
                </ChartSvg>
                <Watermarks>
                  <Watermark $x={436} $y={25} $ls={0.9}>MODHALEE</Watermark>
                  <Watermark $x={402} $y={61} $ls={0.9}>CRUDE MAGIC</Watermark>
                </Watermarks>
                <LevelColumn $x={19} $y={33}>
                  {levelsA.map(([t, c]) => <Level key={t} $c={c}>{t}</Level>)}
                </LevelColumn>
                <LevelColumn $x={147} $y={51}>
                  {levelsB.map(([t, c]) => <Level key={t} $c={c}>{t}</Level>)}
                </LevelColumn>
                <Note $x={595} $y={287} $w={61}>stoploss</Note>
                <Note $x={656} $y={321} $w={30}>sell</Note>
                <Note $x={779} $y={351} $w={20}>t1</Note>
                <Note $x={852} $y={374} $w={18}>t2</Note>
                <InfoBar>
                  <InfoLine $w={605}>M_CRUDEOIL-NOV - 5-minute 09-10-2014 21:55:00 Open 5248, Hi 5250, Lo 5236, Close 5238 (-0.2%)</InfoLine>
                  <InfoLine $w={223} $pad={28}>= 5,238.00, <Ema>EMA1(Close,250)</Ema> = 5,344.95</InfoLine>
                </InfoBar>
              </Plot>
              <PriceAxis>
                {prices.map(p => <PriceLabel key={p}>{p}</PriceLabel>)}
              </PriceAxis>
              <PriceTag>5,344.95</PriceTag>
              <LastTag>5,238</LastTag>
              <LastPlain>5,238</LastPlain>
              <CyanNote>wasoull</CyanNote>
            </ChartRow>
            <TimeAxis>
              <TimeCell $w={43}><TimeLabel>23:00</TimeLabel></TimeCell>
              <TimeCell $w={73.6}><TimeLabel $bold>Oct 9</TimeLabel></TimeCell>
              {hours.map(h => <TimeCell key={h} $w={73.6}><TimeLabel>{h}</TimeLabel></TimeCell>)}
            </TimeAxis>
            <SheetRow>
              <SheetNav>
                <NavIcon d="M9 1v9L3 5.5z" c="#777" bar="M2 1v9" />
                <NavIcon d="M8 1v9L2 5.5z" c="#777" />
                <NavIcon d="M2 1v9l6-4.5z" c="#111" />
                <NavIcon d="M1 1v9l6-4.5z" c="#111" bar="M8 1v9" />
              </SheetNav>
              <SheetTabs>
                {sheets.map(s => <SheetTab key={s}>{s}</SheetTab>)}
                <SheetTab $active>Sheet 1</SheetTab>
              </SheetTabs>
              <SheetTools>
                <SheetBtn>
                  <svg width="9" height="10" viewBox="0 0 9 10"><rect x="1" y="4" width="7" height="5" fill="#111" /><path d="M2.5 4V2.5a2 2 0 0 1 4 0" fill="none" stroke="#111" /></svg>
                </SheetBtn>
                <SheetBtn>+S</SheetBtn>
                <SheetBtn>+I</SheetBtn>
              </SheetTools>
              <SheetTrack>
                <Tri $dir="left" $c="#333" />
                <HThumb $w={13} $ml={252} />
                <Tri $dir="right" $c="#333" style={{ marginLeft: "auto" }} />
              </SheetTrack>
            </SheetRow>
          </Frame>
        </Workspace>
      </Main>

      <StatusBar>
        <StatusCell $w={790}>For Help, press F1</StatusCell>
        <StatusCell $w={17} $bar>X:</StatusCell>
        <StatusCell $w={17} $pad={4} $bar>Y:</StatusCell>
        <StatusCell $w={182} $pad={5} $tight={-0.3} $bar>NYSE, Group 0, Undefined, Undefined</StatusCell>
        <StatusCell $w={76} $pad={5} $tight={-0.55} $bar>RTDSDatabase</StatusCell>
        <StatusCell $w={44} $bar />
        <StatusCell $w={45} $pad={8} $bar>3809M</StatusCell>
        <StatusCell $w={26} $pad={5} $dim>CAP</StatusCell>
      </StatusBar>

      <TaskBar>
        <TaskSlot $w={44}>{TaskIcons.orb}</TaskSlot>
        <TaskSlot $w={66}>{TaskIcons.notepad}</TaskSlot>
        <TaskSlot $w={44}>{TaskIcons.ami}</TaskSlot>
        <TaskSlot $w={50} $ml={8} $active>{TaskIcons.chrome}</TaskSlot>
        <TaskSlot $w={50} $active>{TaskIcons.utorrent}</TaskSlot>
        <TaskSlot $w={50} $active>{TaskIcons.bing}</TaskSlot>
        <TaskSlot $w={50} $active>{TaskIcons.skype}</TaskSlot>
        <TaskSlot $w={50} $active>{TaskIcons.bb}</TaskSlot>
        <TaskSlot $w={50} $active>{TaskIcons.palette}</TaskSlot>
        <TaskSlot $w={50} $active>{TaskIcons.rlogo}</TaskSlot>
        <TaskSlot $w={50} $active>{TaskIcons.amiTri}</TaskSlot>
        <Tray>
          <BingBox>
            <svg width="13" height="17" viewBox="0 0 13 17"><rect width="13" height="17" fill="#f7a600" /><path d="M4 3v10l5-2.5-2-1 .5-2L4 6" fill="#5a3a00" /></svg>
            brett rossi hos
            <svg width="14" height="14" viewBox="0 0 14 14" style={{ flex: "none", marginLeft: "auto" }}><circle cx="8.5" cy="5.5" r="4" fill="none" stroke="#555" strokeWidth="1.5" /><path d="M5.5 8.5l-4 4" stroke="#555" strokeWidth="2" /></svg>
          </BingBox>
          <TrayIcon $w={20}><Tri $dir="up" $c="#eee" /></TrayIcon>
          <TrayIcon $w={24}>
            <svg width="11" height="17" viewBox="0 0 11 17"><rect x="1" y="2" width="9" height="14" rx="2" fill="#ddd" stroke="#222" /><rect x="3.5" y="0.5" width="4" height="2" fill="#ccc" /></svg>
          </TrayIcon>
          <TrayIcon $w={18}>
            <svg width="15" height="16" viewBox="0 0 15 16"><rect x="3" y="4" width="11" height="8" fill="#333" stroke="#ddd" /><rect x="1" y="1" width="4" height="5" fill="#eee" stroke="#333" /><rect x="5" y="13" width="7" height="2" fill="#ddd" /></svg>
          </TrayIcon>
          <TrayIcon $w={22}>
            <svg width="15" height="15" viewBox="0 0 15 15"><rect width="15" height="15" rx="1" fill="#2fd94a" /><path d="M2 5h10M9 2l3 3M13 10H3M6 13l-3-3" stroke="#fff" strokeWidth="1.6" fill="none" /></svg>
          </TrayIcon>
          <Clock>12:53<br />08-11-2014</Clock>
          <ShowDesktop />
        </Tray>
      </TaskBar>
    </Shell>
  );
}
